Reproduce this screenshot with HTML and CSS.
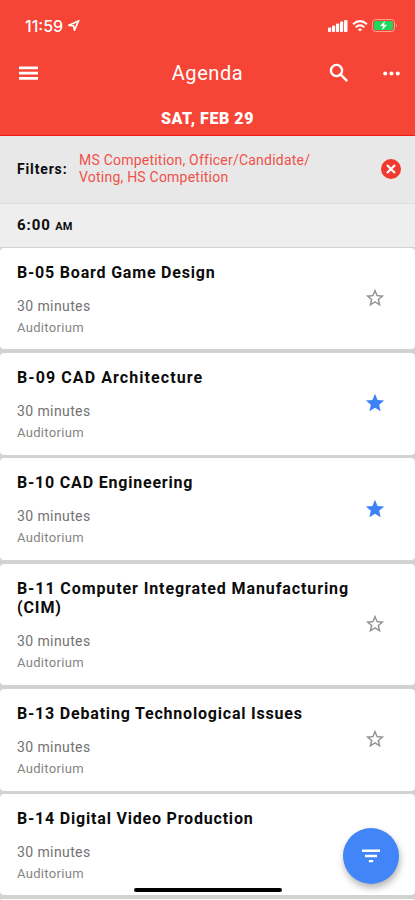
FILE: index.html
```
<!DOCTYPE html>
<html lang="en">
<head>
    <meta charset="UTF-8" />
    <meta name="viewport" content="width=device-width, initial-scale=1" />
    <title>Agenda</title>
    <link rel="stylesheet" href="styles.css">
</head>
<body>
<header class="header">
  <div class="status">
    <span class="clock">11:59</span>
    <svg class="location" width="12" height="11" viewBox="0 0 12 11"><path d="M1 5.2L10.5 1L6.5 10L5.6 5.9Z" fill="none" stroke="#fff" stroke-width="1.7"/></svg>
    <div class="signals">
      <svg width="20" height="13" viewBox="0 0 20 13" fill="#fff"><rect x="0" y="8.5" width="3.2" height="4.5" rx="1"/><rect x="4" y="6.5" width="3.2" height="6.5" rx="1"/><rect x="8" y="4.5" width="3.2" height="8.5" rx="1"/><rect x="12" y="2.5" width="3.2" height="10.5" rx="1"/><rect x="16" y="1" width="3.5" height="12" rx="1"/></svg>
      <svg width="16" height="12" viewBox="0 0 16 12" fill="none" stroke="#fff" stroke-width="2"><path d="M1 4.3Q8 -2 15 4.3M3.7 7.2Q8 3.3 12.3 7.2"/><path d="M8 11.5L5.8 9.3Q8 7.5 10.2 9.3Z" fill="#fff" stroke="none"/></svg>
      <svg width="26" height="13" viewBox="0 0 26 13"><rect x=".5" y=".5" width="22" height="12" rx="3" fill="none" stroke="#f9a08f"/><rect x="2" y="2" width="19" height="9" rx="1.5" fill="#20d65b"/><path d="M24 4.5Q26 6.5 24 8.5Z" fill="#f9a08f"/><path d="M13 1.8L8 7H11L10 11.2L15 5.8H12Z" fill="#fff"/></svg>
    </div>
  </div>
  <div class="toolbar">
    <svg class="menu" width="19" height="15" viewBox="0 0 19 15" fill="#fff"><path d="M0 .6H19V3.3H0ZM0 5.8H19V8.5H0ZM0 11H19V13.7H0Z"/></svg>
    <h1>Agenda</h1>
    <svg class="search" width="20" height="20" viewBox="0 0 20 20" fill="none" stroke="#fff" stroke-width="2.4"><circle cx="7.5" cy="7.5" r="5.6"/><path d="M11.7 11.7L18.2 18.2"/></svg>
    <svg class="more" width="17" height="5" viewBox="0 0 17 5" fill="#fff"><circle cx="2.2" cy="2.5" r="2"/><circle cx="8.5" cy="2.5" r="2"/><circle cx="14.8" cy="2.5" r="2"/></svg>
  </div>
  <div class="date">SAT, FEB 29</div>
</header>

<div class="filters">
  <b>Filters:</b>
  <p>MS Competition, Officer/Candidate/<br>Voting, HS Competition</p>
  <svg width="20" height="20" viewBox="0 0 20 20"><circle cx="10" cy="10" r="10" fill="#f13a2f"/><path d="M6 6L14 14M14 6L6 14" stroke="#fff" stroke-width="2.2"/></svg>
</div>
<div class="time">6:00 <small>AM</small></div>

<!-- shared star shapes -->
<svg class="defs" width="0" height="0">
  <symbol id="star" viewBox="0 0 24 24"><path d="M12 17.27L18.18 21l-1.64-7.03L22 9.24l-7.19-.61L12 2 9.19 8.63 2 9.24l5.46 4.73L5.82 21z"/></symbol>
  <symbol id="star-outline" viewBox="0 0 24 24"><path d="M22 9.24l-7.19-.62L12 2 9.19 8.63 2 9.24l5.46 4.73L5.82 21 12 17.27 18.18 21l-1.63-7.03L22 9.24zM12 15.4l-3.76 2.27 1-4.28-3.32-2.88 4.38-.38L12 6.1l1.71 4.04 4.38.38-3.32 2.88 1 4.28L12 15.4z"/></symbol>
</svg>

<main class="list">
  <div class="card">
    <div class="info">
      <h2>B-05 Board Game Design</h2>
      <p class="length">30 minutes</p>
      <p class="room">Auditorium</p>
    </div>
    <svg class="star"><use href="#star-outline"/></svg>
  </div>
  <div class="card">
    <div class="info">
      <h2 class="wide">B-09 CAD Architecture</h2>
      <p class="length">30 minutes</p>
      <p class="room">Auditorium</p>
    </div>
    <svg class="star on"><use href="#star"/></svg>
  </div>
  <div class="card">
    <div class="info">
      <h2>B-10 CAD Engineering</h2>
      <p class="length">30 minutes</p>
      <p class="room">Auditorium</p>
    </div>
    <svg class="star on"><use href="#star"/></svg>
  </div>
  <div class="card">
    <div class="info">
      <h2 class="long">B-11 Computer Integrated Manufacturing<br>(CIM)</h2>
      <p class="length">30 minutes</p>
      <p class="room">Auditorium</p>
    </div>
    <svg class="star"><use href="#star-outline"/></svg>
  </div>
  <div class="card">
    <div class="info">
      <h2>B-13 Debating Technological Issues</h2>
      <p class="length">30 minutes</p>
      <p class="room">Auditorium</p>
    </div>
    <svg class="star"><use href="#star-outline"/></svg>
  </div>
  <div class="card short">
    <div class="info">
      <h2>B-14 Digital Video Production</h2>
      <p class="length">30 minutes</p>
      <p class="room">Auditorium</p>
    </div>
  </div>
  <div class="card last"></div>
</main>

<button class="fab" aria-label="Filter">
  <svg width="20" height="14" viewBox="0 0 20 14" fill="#fff"><path d="M1 .5H19V3H1ZM4 5.7H16V8.2H4ZM7.8 10.9H12.2V13.3H7.8Z"/></svg>
</button>
<div class="home-bar"></div>
</body>
</html>
```
FILE: styles.css
```
* {
    box-sizing: border-box;
}
body {
    margin: 0;
    height: 900px;
    overflow: hidden;
    position: relative;
    background-color: #d2d2d2;
    color: #0c0c0c;
    font-family: Roboto, "Liberation Sans", sans-serif;
}
h1, h2, p {
    margin: 0;
}
svg {
    flex: none;
}
.header {
    height: 136px;
    background-color: #f64436;
    border-bottom: 1px solid #ee1c12;
    color: #fff;
}
.status {
    display: flex;
    align-items: center;
    height: 51px;
    padding: 0 17px 0 25px;
}
.clock {
    font-family: Inter, sans-serif;
    font-size: 16px;
    font-weight: 500;
}
.location {
    margin-left: 5px;
}
.signals {
    display: flex;
    align-items: center;
    gap: 4px;
    margin-left: auto;
}
.toolbar {
    display: grid;
    grid-template-columns: 19px 1fr 20px 17px;
    align-items: center;
    height: 44px;
    padding: 0 15px 0 19px;
}
.toolbar h1 {
    padding-left: 14px;
    text-align: center;
    font-size: 20px;
    font-weight: 400;
    letter-spacing: 0.6px;
}
.toolbar .search {
    margin-left: -34px;
}
.date {
    height: 40px;
    line-height: 47px;
    text-align: center;
    font-size: 16px;
    font-weight: 900;
    letter-spacing: 0.55px;
}
.filters {
    display: flex;
    align-items: center;
    height: 68px;
    padding: 0 14px 2px 17px;
    background-color: #e8e8e8;
    border-bottom: 1px solid #dedede;
}
.filters b {
    width: 62px;
    font-size: 14px;
    letter-spacing: 0.85px;
}
.filters p {
    flex: 1;
    color: #ef5148;
    font-size: 14px;
    line-height: 17px;
    letter-spacing: 0.22px;
    white-space: nowrap;
}
.time {
    height: 44px;
    padding-left: 17px;
    background-color: #eee;
    border-bottom: 1px solid #d2d2d2;
    font-size: 15px;
    font-weight: 700;
    line-height: 43px;
    letter-spacing: 0.9px;
}
.time small {
    font-size: 11px;
    letter-spacing: 0;
}
.defs {
    position: absolute;
}
.list {
    display: flex;
    flex-direction: column;
    gap: 3.5px;
    height: 652px;
    overflow: hidden;
}
.card {
    display: flex;
    align-items: center;
    padding: 15px 29px 12px 17px;
    background-color: #fff;
    border-radius: 4px;
    flex: none;
}
.card:first-child {
    padding: 14.5px 29px 11.5px 17px;
}
.card.short {
    padding-bottom: 11px;
}
.card.last {
    height: 4px;
    padding: 0;
}
.info {
    flex: 1;
}
.card h2 {
    margin-bottom: 13.5px;
    font-size: 16px;
    font-weight: 700;
    line-height: 19.5px;
    letter-spacing: 0.8px;
    white-space: nowrap;
}
.card h2.wide {
    letter-spacing: 1.08px;
}
.card h2.long {
    letter-spacing: 0.9px;
}
.card p {
    line-height: 21px;
}
.length {
    color: #727272;
    font-size: 14px;
    letter-spacing: 0.4px;
}
.room {
    color: #858585;
    font-size: 13px;
    letter-spacing: 0.32px;
}
.star {
    width: 22px;
    height: 22px;
    margin-bottom: 4px;
    fill: #929292;
}
.star.on {
    fill: #3c82f6;
}
.fab {
    position: absolute;
    left: 343px;
    top: 828px;
    display: flex;
    align-items: center;
    justify-content: center;
    width: 56px;
    height: 56px;
    padding: 0;
    border: none;
    border-radius: 50%;
    background-color: #4285f8;
    box-shadow: 1px 4px 7px rgba(0, 0, 0, 0.3);
}
.home-bar {
    position: absolute;
    left: 134px;
    top: 888px;
    width: 148px;
    height: 4px;
    border-radius: 2px;
    background-color: #000;
}
```
